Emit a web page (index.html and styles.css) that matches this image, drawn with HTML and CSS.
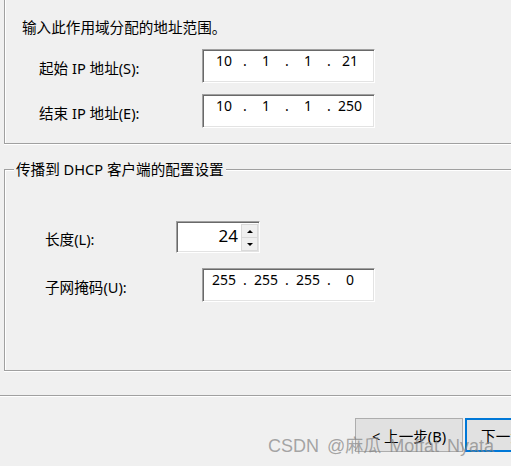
FILE: index.html
```html
<!DOCTYPE html>
<html lang="zh-CN">
<head>
    <meta charset="UTF-8">
    <meta name="viewport" content="width=device-width, initial-scale=1.0">
    <title>新建作用域向导 - IP 地址范围</title>
    <link rel="stylesheet" href="styles.css">
</head>
<body>
    <div class="dialog">
        <!-- DHCP 服务器的配置设置 -->
        <div class="range-group">
            <p class="hint">输入此作用域分配的地址范围。</p>
            <div class="row">
                <label class="label">起始 IP 地址(S):</label>
                <div class="ip-field">
                    <span class="seg">10</span><span class="dot">.</span>
                    <span class="seg">1</span><span class="dot">.</span>
                    <span class="seg">1</span><span class="dot">.</span>
                    <span class="seg">21</span>
                </div>
            </div>
            <div class="row row-second">
                <label class="label">结束 IP 地址(E):</label>
                <div class="ip-field">
                    <span class="seg">10</span><span class="dot">.</span>
                    <span class="seg">1</span><span class="dot">.</span>
                    <span class="seg">1</span><span class="dot">.</span>
                    <span class="seg">250</span>
                </div>
            </div>
        </div>

        <!-- 传播到 DHCP 客户端的配置设置 -->
        <fieldset class="client-group">
            <legend>传播到 DHCP 客户端的配置设置</legend>
            <div class="row">
                <label class="label label-short">长度(L):</label>
                <div class="spin-field">
                    <span class="spin-value">24</span>
                    <span class="spin-buttons">
                        <span class="spin-btn"><span class="arrow-up"></span></span>
                        <span class="spin-btn"><span class="arrow-down"></span></span>
                    </span>
                </div>
            </div>
            <div class="row row-mask">
                <label class="label label-mask">子网掩码(U):</label>
                <div class="ip-field">
                    <span class="seg">255</span><span class="dot">.</span>
                    <span class="seg">255</span><span class="dot">.</span>
                    <span class="seg">255</span><span class="dot">.</span>
                    <span class="seg">0</span>
                </div>
            </div>
        </fieldset>

        <div class="separator"></div>

        <div class="buttons">
            <button class="btn">&lt; 上一步(B)</button>
            <button class="btn btn-default">下一步(N) &gt;</button>
        </div>

        <div class="watermark">CSDN @麻瓜 Moffat Nyata</div>
    </div>
</body>
</html>
```

FILE: styles.css
```css
html, body { margin: 0; padding: 0; }
body { background: #f0f0f0; color: #000; font-family: "Noto Sans", "Noto Sans CJK SC", sans-serif; font-size: 14.6px; overflow: hidden; }
.dialog { position: relative; width: 511px; height: 466px; overflow: hidden; }

/* group boxes */
.range-group { margin-left: 4px; padding: 17px 0 15px 17px; border-left: 1px solid #a0a0a0; border-bottom: 1px solid #a0a0a0; box-shadow: inset 1px 0 #fff, 0 1px #fff; }
.hint { margin: 0; line-height: 20px; }

.client-group { margin: 15px 0 0 4px; padding: 42px 0 68px 0; min-width: 0; border: 1px solid #a0a0a0; border-right: none; box-shadow: inset 1px 1px #fff, 0 1px #fff; }
.client-group legend { margin-left: 9px; padding: 0 2px; line-height: 20px; background: #f0f0f0; }

/* rows */
.row { display: flex; align-items: center; padding-left: 17px; }
.row-second { margin-top: 11px; }
.range-group .row:first-of-type { margin-top: 12px; }
.client-group .row { padding-left: 40px; }
.row-mask { margin-top: 15px; }
.label { width: 163px; flex: none; padding-top: 4px; line-height: 20px; }
.label-short { width: 131px; }
.label-mask { width: 157px; }

/* sunken fields */
.ip-field, .spin-field { box-sizing: border-box; background: #fff; border-top: 1px solid #a0a0a0; border-left: 1px solid #a0a0a0; border-right: 1px solid #fff; border-bottom: 1px solid #fff; box-shadow: inset 1px 1px #696969, inset -1px -1px #e3e3e3; }
.ip-field { display: grid; grid-template-columns: 36px 6px 36px 6px 36px 6px 36px; align-items: start; width: 173px; height: 34px; padding: 2px 0 0 3px; font-size: 14px; line-height: 18px; }
.seg { text-align: center; }
.dot { text-align: center; }

.spin-field { display: flex; width: 84px; height: 32px; padding: 2px 1px 1px 2px; }
.spin-value { flex: 1; text-align: right; padding-right: 3px; font-size: 17px; line-height: 24px; }
.spin-buttons { display: flex; flex-direction: column; width: 17px; }
.spin-btn { flex: 1; display: flex; align-items: center; justify-content: center; background: #f0f0f0; border: 1px solid #dadada; }
.spin-btn + .spin-btn { border-top: none; }
.arrow-up { border-left: 3px solid transparent; border-right: 3px solid transparent; border-bottom: 3px solid #000; }
.arrow-down { border-left: 3px solid transparent; border-right: 3px solid transparent; border-top: 3px solid #000; }

/* footer */
.separator { margin-top: 24px; border-top: 1px solid #a0a0a0; border-bottom: 1px solid #fff; }
.buttons { display: flex; gap: 2px; margin-top: 21px; padding-left: 355px; }
.btn { flex: none; width: 108px; height: 34px; padding: 0; background: #e1e1e1; border: 1px solid #adadad; font-family: inherit; font-size: 14.6px; color: #000; }
.btn-default { border-color: #0078d7; box-shadow: inset 0 0 0 1px #0078d7; }

/* overlay from the original screenshot */
.watermark { position: absolute; left: 268px; top: 434px; font-family: "Liberation Sans", "Noto Sans CJK SC", sans-serif; font-size: 18px; line-height: 24px; word-spacing: 3px; color: rgba(130, 130, 130, 0.7); white-space: nowrap; }
```
